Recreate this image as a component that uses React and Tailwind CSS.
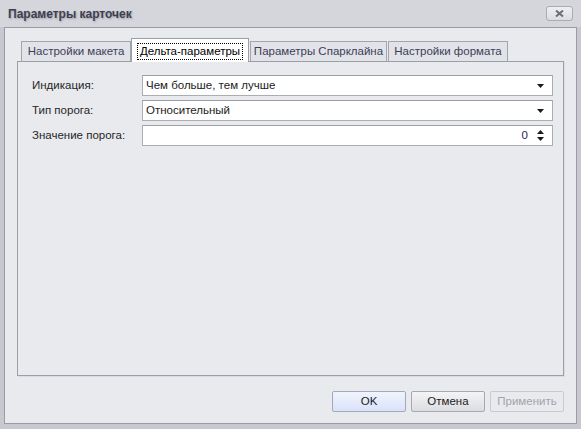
const font = { fontFamily: '"Liberation Sans", Arial, sans-serif' }

function Tab({ label, active, width }) {
  if (active) {
    return (
      <div
        className={`relative z-10 -mb-px flex h-[24px] items-center justify-center border border-b-0 border-[#9c9ea8] bg-white pt-[1px] ${width}`}
      >
        <span className="border border-dotted border-black px-[2px] leading-[15px] text-black">{label}</span>
      </div>
    )
  }
  return (
    <div
      className={`flex h-[20px] items-center justify-center border border-b-0 border-[#a3a5ae] bg-[#e2e3e8] pt-[1px] text-[#3c3d58] ${width}`}
    >
      {label}
    </div>
  )
}

function Arrow() {
  return (
    <svg width="7" height="4" viewBox="0 0 7 4" className="block">
      <path d="M0 0h7L3.5 4z" fill="#1a1a1a" />
    </svg>
  )
}

function Combo({ value }) {
  return (
    <div className="flex h-[21px] flex-1 items-center border border-[#abadb5] border-t-[#9c9ea8] bg-white pl-[3px] pr-[8px]">
      <span className="flex-1 text-[#1b1b1b]">{value}</span>
      <Arrow />
    </div>
  )
}

function Spin({ value }) {
  return (
    <div className="flex h-[21px] flex-1 items-center border border-[#abadb5] border-t-[#9c9ea8] bg-white pl-[3px] pr-[8px]">
      <span className="flex-1 pr-[9px] text-right text-[#2e2250]">{value}</span>
      <div className="flex flex-col gap-[3px]">
        <svg width="7" height="4" viewBox="0 0 7 4" className="block">
          <path d="M0 4h7L3.5 0z" fill="#1a1a1a" />
        </svg>
        <Arrow />
      </div>
    </div>
  )
}

function Row({ label, children }) {
  return (
    <div className="flex items-center">
      <div className="w-[110px] text-[#262626]">{label}</div>
      {children}
    </div>
  )
}

function Button({ children, variant }) {
  const styles = {
    primary: 'border-[#a4a9ba] bg-gradient-to-b from-[#f1f4fd] to-[#d9e2f9] text-[#1b1b1b]',
    normal: 'border-[#a6a8b2] bg-gradient-to-b from-[#f4f4f6] to-[#dcdde2] text-[#1b1b1b]',
    disabled: 'border-[#c9cad0] bg-[#e9eaee] text-[#a3a4ab]',
  }
  return (
    <div className={`flex h-[21px] w-[74px] items-center justify-center rounded-[2px] border ${styles[variant]}`}>
      {children}
    </div>
  )
}

export default function App() {
  return (
    <div className="flex h-[429px] w-[581px] flex-col bg-[#c8c9d0] text-[11.5px]" style={font}>
      {/* title bar */}
      <div className="flex h-[27px] items-center bg-[#d5d6dc] pl-[8px] pr-[8px]">
        <span className="flex-1 text-[12px] font-bold text-[#3e3f50] [text-shadow:1px_1px_2px_rgba(60,60,80,0.35)]">
          Параметры карточек
        </span>
        <div className="flex h-[15px] w-[27px] items-center justify-center rounded-[3px] border border-[#a9abb4] bg-gradient-to-b from-[#eeeff2] to-[#dcdde2]">
          <svg width="9" height="7" viewBox="0 0 9 7">
            <path d="M1 0.5l7 6M8 0.5l-7 6" stroke="#6b6d78" strokeWidth="2" />
          </svg>
        </div>
      </div>

      {/* client area */}
      <div className="mx-[4px] mb-[5px] flex flex-1 flex-col border border-[#9a9ba4] bg-[#e9eaee] px-[12px] pt-[10px]">
        <div className="flex items-end pl-[4px]">
          <Tab label="Настройки макета" width="w-[110px]" />
          <Tab label="Дельта-параметры" width="w-[118px]" active />
          <div className="w-[1px]" />
          <Tab label="Параметры Спарклайна" width="w-[137px]" />
          <div className="w-[1px]" />
          <Tab label="Настройки формата" width="w-[120px]" />
        </div>

        <div className="flex h-[315px] flex-col gap-[4px] border border-[#9c9ea8] px-[14px] pt-[13px] pr-[10px] shadow-[1px_1px_0_#dcdde2]">
          <Row label="Индикация:">
            <Combo value="Чем больше, тем лучше" />
          </Row>
          <Row label="Тип порога:">
            <Combo value="Относительный" />
          </Row>
          <Row label="Значение порога:">
            <Spin value="0" />
          </Row>
        </div>

        <div className="mt-[15px] flex justify-end gap-[5px]">
          <Button variant="primary">OK</Button>
          <Button variant="normal">Отмена</Button>
          <Button variant="disabled">Применить</Button>
        </div>
      </div>
    </div>
  )
}
